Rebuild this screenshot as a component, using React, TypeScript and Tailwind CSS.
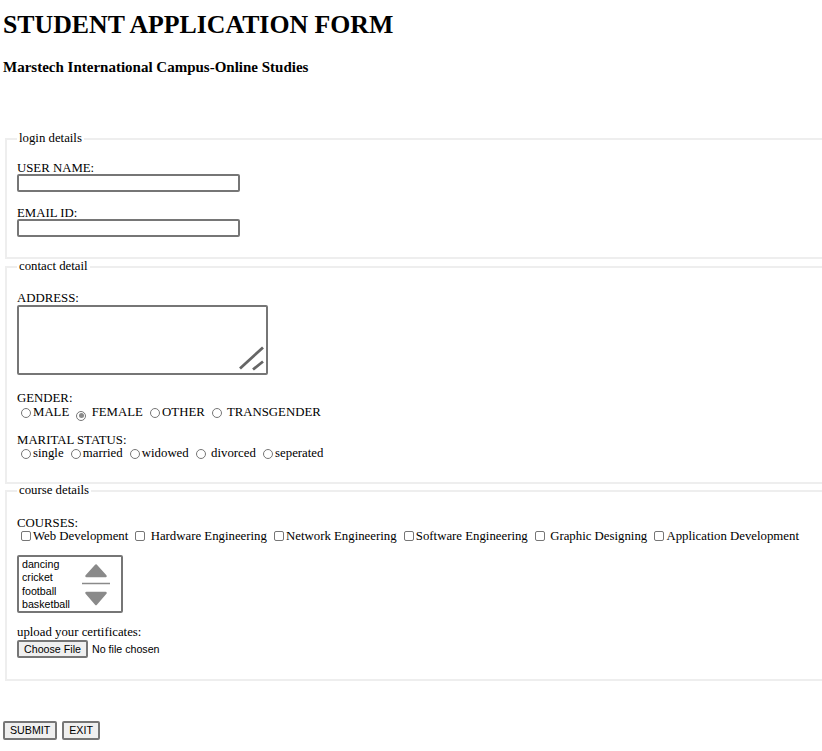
import React from 'react'

type Opt = { label: string; gap?: boolean; checked?: boolean }

function Radio({ checked }: { checked?: boolean }) {
    return (
        <span className="ml-[4px] mr-[2px] inline-flex h-[10px] w-[10px] items-center justify-center rounded-full border border-[#767676] bg-white align-[-2px]">
            {checked && <span className="h-[5px] w-[5px] rounded-full bg-[#8a8a8a]" />}
        </span>
    )
}

function Check() {
    return <span className="ml-[4px] mr-[2px] inline-block h-[10px] w-[10px] rounded-[2px] border border-[#767676] bg-white align-[-1px]" />
}

function Fieldset({ legend, className, children }: { legend: string; className: string; children: React.ReactNode }) {
    return (
        <fieldset className={`ml-[2px] w-[840px] border-2 border-[#eeeeee] pl-[10px] ${className}`}>
            <legend className="px-[2px] pb-[1px] leading-[11px]">{legend}</legend>
            {children}
        </fieldset>
    )
}

const gender: Opt[] = [
    { label: 'MALE' },
    { label: 'FEMALE', gap: true, checked: true },
    { label: 'OTHER' },
    { label: 'TRANSGENDER', gap: true },
]

const marital: Opt[] = [
    { label: 'single' },
    { label: 'married' },
    { label: 'widowed' },
    { label: 'divorced', gap: true },
    { label: 'seperated' },
]

const courses: Opt[] = [
    { label: 'Web Development' },
    { label: 'Hardware Engineering', gap: true },
    { label: 'Network Engineering' },
    { label: 'Software Engineering' },
    { label: 'Graphic Designing', gap: true },
    { label: 'Application Development' },
]

const sports = ['dancing', 'cricket', 'football', 'basketball']

export default function App() {
    return (
        <div className="min-h-screen overflow-hidden bg-white pl-[3px] font-['Liberation_Serif',serif] text-[12.8px] text-black">
            <h1 className="pt-[12px] text-[25.8px] font-bold leading-[26px]">STUDENT APPLICATION FORM</h1>
            <h3 className="mt-[22px] text-[15px] font-bold leading-[15px]">Marstech International Campus-Online Studies</h3>

            <form>
                <Fieldset legend="login details" className="mt-[58px] pt-[17px] pb-[20px]">
                    <div className="leading-[12px]">USER NAME:</div>
                    <input type="text" className="block h-[18px] w-[223px] rounded-[2px] border-2 border-[#767676] bg-white" />
                    <div className="mt-[15px] leading-[12px]">EMAIL ID:</div>
                    <input type="email" className="block h-[18px] w-[223px] rounded-[2px] border-2 border-[#767676] bg-white" />
                </Fieldset>

                <Fieldset legend="contact detail" className="mt-[2px] pt-[19px] pb-[22px]">
                    <div className="leading-[12px]">ADDRESS:</div>
                    <div className="relative mt-[1px] h-[70px] w-[251px]">
                        <textarea className="block h-[70px] w-[251px] resize-none rounded-[2px] border-2 border-[#767676] bg-white" />
                        <svg className="absolute bottom-0 right-0" width="30" height="30" viewBox="0 0 30 30">
                            <path d="M2 23.5 L25 2.5 M15 24.5 L25 16.5" stroke="#666666" strokeWidth="2.8" fill="none" />
                        </svg>
                    </div>
                    <div className="mt-[17px] leading-[12px]">GENDER:</div>
                    <div className="mt-[1px] leading-[14px]">
                        {gender.map((o) => (
                            <React.Fragment key={o.label}>
                                <label>
                                    <Radio checked={o.checked} />
                                    {o.gap ? ' ' : ''}
                                    {o.label}
                                </label>{' '}
                            </React.Fragment>
                        ))}
                    </div>
                    <div className="mt-[13px] leading-[12px]">MARITAL STATUS:</div>
                    <div className="leading-[14px]">
                        {marital.map((o) => (
                            <React.Fragment key={o.label}>
                                <label>
                                    <Radio />
                                    {o.gap ? ' ' : ''}
                                    {o.label}
                                </label>{' '}
                            </React.Fragment>
                        ))}
                    </div>
                </Fieldset>

                <Fieldset legend="course details" className="mt-[1px] pt-[20px] pb-[21px]">
                    <div className="leading-[12px]">COURSES:</div>
                    <div className="leading-[14px]">
                        {courses.map((o) => (
                            <React.Fragment key={o.label}>
                                <label>
                                    <Check />
                                    {o.gap ? ' ' : ''}
                                    {o.label}
                                </label>{' '}
                            </React.Fragment>
                        ))}
                    </div>
                    <div className="mt-[12px] flex h-[58px] w-[106px] rounded-[2px] border-2 border-[#767676] bg-white font-['Liberation_Sans',Arial,sans-serif] text-[10.67px]">
                        <div className="w-[62px] pl-[3px] pt-[1px]">
                            {sports.map((s) => (
                                <div key={s} className="leading-[13.5px]">{s}</div>
                            ))}
                        </div>
                        <svg className="mt-[2px]" width="30" height="52" viewBox="0 0 30 52">
                            <path d="M15 6.5 L24.5 17 L5.5 17 Z" fill="#8a8a8a" stroke="#8a8a8a" strokeWidth="2.5" strokeLinejoin="round" />
                            <path d="M1 24.5 H29" stroke="#8a8a8a" strokeWidth="1.5" />
                            <path d="M5.5 34 L24.5 34 L15 45 Z" fill="#8a8a8a" stroke="#8a8a8a" strokeWidth="2.5" strokeLinejoin="round" />
                        </svg>
                    </div>
                    <div className="mt-[13px] leading-[12px]">upload your certificates:</div>
                    <div className="mt-[2px] flex items-center font-['Liberation_Sans',Arial,sans-serif] text-[10.67px]">
                        <button type="button" className="h-[18px] w-[71px] rounded-[2px] border-2 border-[#767676] bg-[#efefef] leading-[14px]">
                            Choose File
                        </button>
                        <span className="ml-[4px]">No file chosen</span>
                    </div>
                </Fieldset>

                <div className="mt-[40px] flex gap-[5px] font-['Liberation_Sans',Arial,sans-serif] text-[10.67px]">
                    <button type="submit" className="h-[19px] rounded-[2px] border-2 border-[#767676] bg-[#efefef] px-[5px] leading-[15px]">
                        SUBMIT
                    </button>
                    <button type="button" className="h-[19px] rounded-[2px] border-2 border-[#767676] bg-[#efefef] px-[5px] leading-[15px]">
                        EXIT
                    </button>
                </div>
            </form>
        </div>
    )
}
